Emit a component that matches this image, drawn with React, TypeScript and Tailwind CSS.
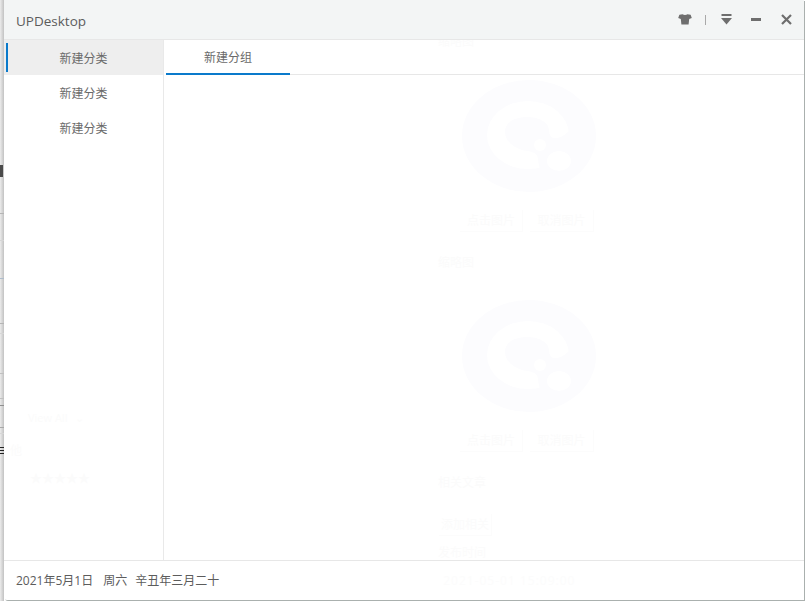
import React from "react";

const font = { fontFamily: '"Open Sans", "Noto Sans CJK SC", sans-serif' };

function GhostLogo({ className }: { className: string }) {
  return (
    <svg className={className} width="136" height="114" viewBox="0 0 136 114" fill="none">
      <ellipse cx="67" cy="56" rx="67" ry="56" fill="#fcfcfe" />
      <ellipse cx="66" cy="55" rx="41" ry="34" fill="#ffffff" />
      <path
        d="M43 52 C43 42 53 37 65 37 C78 37 87 43 87 50 C87 60 96 62 108 50 L122 80 L80 100 L76 80 C76 72 70 72 60 70 C50 67 43 60 43 52Z"
        fill="#fcfcfe"
      />
      <circle cx="78" cy="65" r="6" fill="#ffffff" />
      <ellipse cx="97" cy="81" rx="12" ry="10" fill="#ffffff" />
    </svg>
  );
}

function GhostButtons({ className }: { className: string }) {
  return (
    <div className={"flex gap-[7px] ml-[22px] text-[12px] text-[#fbfbfb] " + className}>
      <div className="w-[63px] h-[22px] flex items-center justify-center border-r border-b border-[#fcfcfc]">点击图片</div>
      <div className="w-[64px] h-[22px] flex items-center justify-center border-r border-b border-[#fcfcfc]">取消图片</div>
    </div>
  );
}

function Line({ className }: { className: string }) {
  return <span className={"block w-[4px] h-px shrink-0 " + className} />;
}

function DesktopEdge() {
  return (
    <div className="w-[4px] h-[601px] shrink-0 flex flex-col bg-gradient-to-r from-[#ececec] to-[#c2c2c2]">
      <span className="block w-[3px] h-[12px] mt-[165px] shrink-0 bg-[#4a4a4a]" />
      <Line className="mt-[36px] bg-[#b5b5b5]" />
      <Line className="mt-[26px] bg-[#d6d6d6]" />
      <Line className="mt-[37px] bg-[#aebccb]" />
      <Line className="mt-[44px] bg-[#b5b5b5]" />
      <Line className="mt-[9px] bg-[#d6d6d6]" />
      <Line className="mt-[39px] bg-[#c0c0c0]" />
      <Line className="mt-[24px] bg-[#c0c0c0]" />
      <Line className="mt-[6px] bg-[#8f8f8f]" />
      <Line className="mt-[21px] bg-[#a8a8a8]" />
      <Line className="mt-[5px] bg-[#d6d6d6]" />
      <Line className="mt-[13px] bg-[#222222]" />
      <Line className="mt-[2px] bg-[#222222]" />
      <Line className="mt-[2px] bg-[#222222]" />
    </div>
  );
}

function Category({ active }: { active?: boolean }) {
  return (
    <div className={"h-[35px] pt-[2px] flex items-center justify-center text-[12px] text-[#6a6a6a] " + (active ? "bg-[#eeeeee] relative" : "")}>
      {active && <span className="absolute left-[2px] top-[3px] w-[2px] h-[29px] bg-[#0a7acb]" />}
      新建分类
    </div>
  );
}

function Sidebar() {
  return (
    <aside className="w-[160px] shrink-0 border-r border-[#e9e9e9] flex flex-col">
      <Category active />
      <Category />
      <Category />
      <div className="flex items-center gap-[8px] mt-[267px] pl-[24px] text-[11px] leading-none text-[#fbfbfb]">
        <span>View All</span>
        <span>⌄</span>
      </div>
      <div className="mt-[22px] pl-[6px] text-[12px] leading-none text-[#fbfbfb]">他</div>
      <div className="mt-[16px] pl-[26px] text-[12px] leading-none text-[#fbfbfb]">★★★★★</div>
    </aside>
  );
}

export default function App() {
  return (
    <div className="w-[806px] h-[601px] bg-white overflow-hidden flex" style={font}>
      <DesktopEdge />

      <div className="w-[800px] h-[600px] bg-white flex flex-col rounded-tl-[3px] rounded-bl-[3px] shadow-[1px_1px_0_#aab0ae]">
        <header className="h-[40px] shrink-0 bg-[#f3f5f5] border-b border-[#e7e7e7] flex items-center pl-[12px] relative z-10">
          <span className="text-[13.5px] text-[#5c5c5c] mt-[3px]">UPDesktop</span>
          <div className="ml-auto flex items-center">
            <svg width="14" height="11" viewBox="0 0 14 11" className="mr-[13px]">
              <path d="M4.6 0.2 L1.4 0.8 L0.2 4 L2.8 5 L3.4 10.6 L10.6 10.6 L11.2 5 L13.8 4 L12.6 0.8 L9.4 0.2 C8.4 1.2 5.6 1.2 4.6 0.2Z" fill="#6e6e6e" />
            </svg>
            <span className="w-px h-[10px] bg-[#a9a9a9] mr-[15px]" />
            <svg width="11" height="11" viewBox="0 0 11 11" className="mr-[19px]">
              <rect x="0.5" y="0" width="10" height="2" fill="#6e6e6e" />
              <path d="M0 4 H11 L5.5 10.5Z" fill="#6e6e6e" />
            </svg>
            <span className="w-[10px] h-[3px] bg-[#6e6e6e] mr-[20px]" />
            <svg width="11" height="11" viewBox="0 0 11 11" className="mr-[12px]">
              <path d="M1 1 L10 10 M10 1 L1 10" stroke="#6e6e6e" strokeWidth="2.2" />
            </svg>
          </div>
        </header>

        <main className="flex-1 min-h-0 flex relative">
          <Sidebar />

          <section className="flex-1 min-w-0 pl-[2px]">
            <div className="h-[35px] border-b border-[#e7e7e7] flex">
              <div className="w-[124px] h-[35px] pt-[2px] border-b-2 border-[#0a7acb] flex items-center justify-center text-[12px] text-[#6a6a6a]">
                新建分组
              </div>
            </div>
          </section>

          {/* the page behind, barely visible through the translucent window */}
          <div className="absolute left-[434px] top-[-4px] flex flex-col text-[12px] leading-none text-[#fbfbfb] pointer-events-none">
            <div>缩略图</div>
            <GhostLogo className="mt-[32px] ml-[24px]" />
            <GhostButtons className="mt-[16px]" />
            <div className="mt-[25px]">缩略图</div>
            <GhostLogo className="mt-[31px] ml-[24px]" />
            <GhostButtons className="mt-[16px]" />
            <div className="mt-[25px]">相关文章</div>
            <div className="mt-[25px] ml-[1px] w-[53px] h-[22px] flex items-center justify-center border-r border-b border-[#fcfcfc]">添加相关</div>
            <div className="mt-[11px]">发布时间</div>
          </div>
        </main>

        <footer className="h-[40px] shrink-0 border-t border-[#e7e7e7] flex items-center pl-[12px] text-[12px] text-[#5c5c5c]">
          <span>2021年5月1日</span>
          <span className="ml-[10px]">周六</span>
          <span className="ml-[8px]">辛丑年三月二十</span>
          <span className="ml-[224px] tracking-[1px] text-[#fcfcfc]">2021-05-01 15:09:00</span>
        </footer>
      </div>
    </div>
  );
}
